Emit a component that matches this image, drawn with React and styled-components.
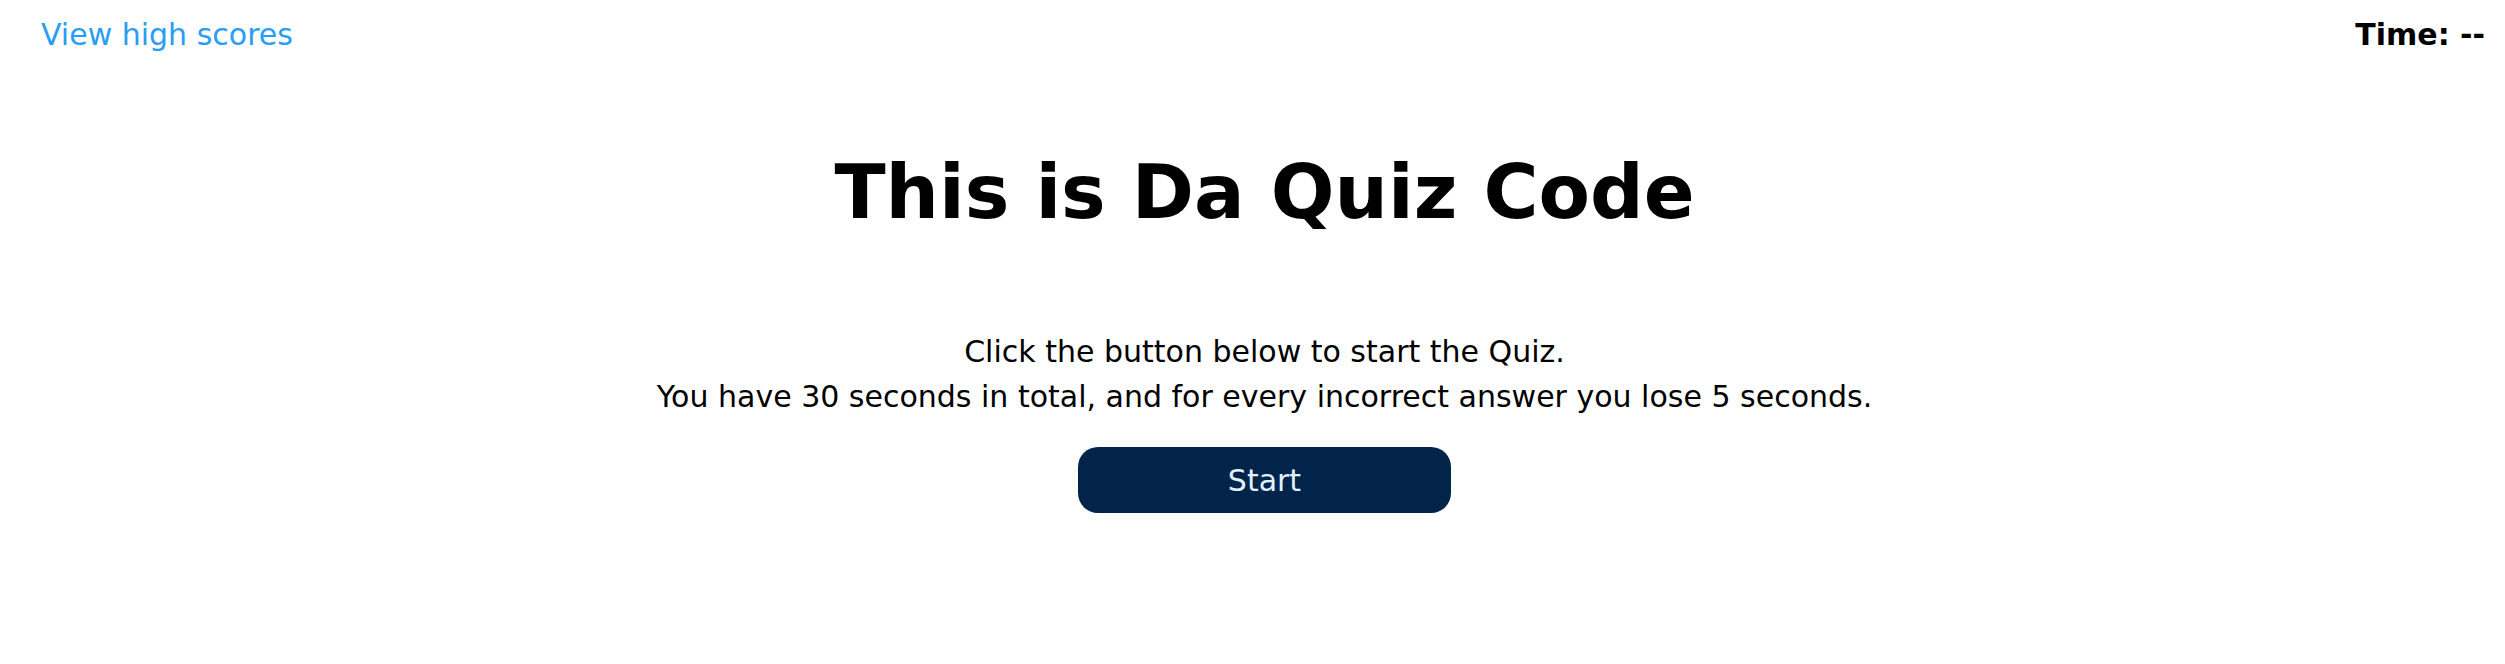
import React from "react";
import styled, { createGlobalStyle } from "styled-components";

const Global = createGlobalStyle`
  html, body { margin: 0; padding: 0; background: #ffffff; }
  body { font-family: "DejaVu Sans", Verdana, sans-serif; font-size: 30px; color: #000; }
`;

const Header = styled.header`
  display: flex;
  justify-content: space-between;
  align-items: center;
  padding: 17px 20px 0 41px;
  line-height: 35px;
`;

const ScoresLink = styled.a`
  color: #2a9df4;
  text-decoration: none;
  font-size: 30px;
`;

const Timer = styled.div`
  font-weight: bold;
  font-size: 30px;
`;

const Main = styled.main`
  display: flex;
  flex-direction: column;
  align-items: center;
  text-align: center;
  padding-left: 24px;
`;

const Title = styled.h1`
  margin: 96px 0 0;
  font-size: 75px;
  line-height: 88px;
  font-weight: bold;
`;

const Intro = styled.p`
  margin: 93px 0 0;
  font-size: 30px;
  line-height: 45px;
`;

const StartButton = styled.button`
  margin-top: 28px;
  width: 373px;
  height: 66px;
  border: none;
  border-radius: 20px;
  background: #03244a;
  color: #dff1ff;
  font-family: "DejaVu Sans", Verdana, sans-serif;
  font-size: 30px;
  cursor: pointer;
`;

export default function App() {
  return (
    <>
      <Global />
      <Header>
        <ScoresLink href="#">View high scores</ScoresLink>
        <Timer>Time: --</Timer>
      </Header>
      <Main>
        <Title>This is Da Quiz Code</Title>
        <Intro>
          Click the button below to start the Quiz.
          <br />
          You have 30 seconds in total, and for every incorrect answer you lose 5 seconds.
        </Intro>
        <StartButton>Start</StartButton>
      </Main>
    </>
  );
}
